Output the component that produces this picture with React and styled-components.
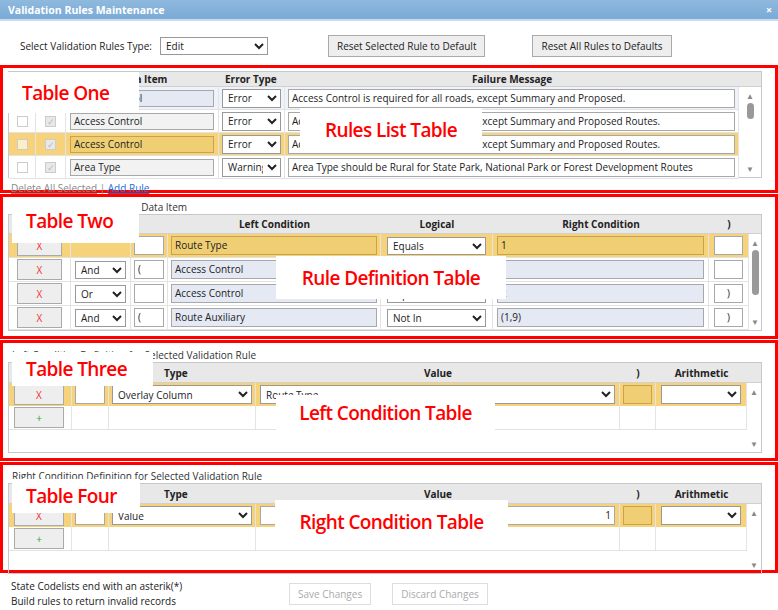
import React from "react";
import styled, { createGlobalStyle } from "styled-components";

const Global = createGlobalStyle`
  body { margin: 0; background: #fff; font-family: "Open Sans", "Liberation Sans", sans-serif; font-size: 10px; color: #222; }
  * { box-sizing: border-box; }
`;

const YELLOW = "#f6d27a";

const Page = styled.div`
  width: 778px;
  height: 610px;
  display: flex;
  flex-direction: column;
  overflow: hidden;
`;

const TitleBar = styled.div`
  height: 21px;
  background: linear-gradient(#8fb9de, #7aaad6);
  border-bottom: 2px solid #c9dcef;
  color: #fff;
  font-weight: 700;
  font-size: 10.5px;
  display: flex;
  align-items: center;
  justify-content: space-between;
  padding: 0 6px 0 8px;
`;

const Toolbar = styled.div`
  display: flex;
  align-items: center;
  height: 44px;
  padding: 6px 0 0 20px;
`;

const Label = styled.span`
  margin-right: 8px;
`;

const Select = styled.select`
  width: ${p => p.w || "100%"};
  height: ${p => p.h || 18}px;
  font-family: inherit;
  font-size: 10px;
  border: 1px solid #999;
  background: #fff;
  padding: 0 1px;
  color: #222;
`;

const Button = styled.button`
  height: 22px;
  padding: 0 8px;
  font-family: inherit;
  font-size: 10px;
  border: 1px solid ${p => (p.disabled ? "#ddd" : "#aaa")};
  background: ${p => (p.disabled ? "#fff" : "#eee")};
  color: ${p => (p.disabled ? "#aaa" : "#222")};
  margin-left: ${p => p.ml || 0}px;
`;

const RedBox = styled.div`
  position: relative;
  border: 3px solid #f00;
  height: ${p => p.h}px;
  padding: ${p => p.pt || 3}px 13px 0 5px;
  margin-bottom: 1px;
`;

const Caption = styled.div`
  height: 13px;
  line-height: 13px;
  padding-left: 4px;
  color: #333;
`;

const Frame = styled.div`
  border: 1px solid #c8c8c8;
  height: ${p => p.h}px;
  display: flex;
  flex-direction: column;
`;

const Grid = styled.div`
  display: grid;
  grid-template-columns: ${p => p.cols};
  align-items: center;
  height: ${p => p.h}px;
  background: ${p => p.bg || "#fff"};
  border-bottom: ${p => (p.line ? "1px solid #e2e2e2" : "none")};
`;

const Head = styled(Grid)`
  background: #e8e8e8;
  font-weight: 700;
  border-bottom: 1px solid #d0d0d0;
`;

const HCell = styled.div`
  text-align: ${p => p.align || "center"};
  padding-left: ${p => p.pl || 0}px;
`;

const Cell = styled.div`
  height: 100%;
  display: flex;
  align-items: center;
  justify-content: ${p => (p.center ? "center" : "flex-start")};
  padding: 0 ${p => p.px ?? 4}px;
  border-right: 1px solid #e4e4e4;
`;

const Body = styled.div`
  flex: 1;
  display: flex;
  min-height: 0;
`;

const Rows = styled.div`
  flex: 1;
`;

const Scroll = styled.div`
  width: ${p => p.w}px;
  display: flex;
  flex-direction: column;
  align-items: center;
  justify-content: space-between;
  color: #888;
  font-size: 8px;
  padding: 3px 0;
`;

const Thumb = styled.div`
  width: 7px;
  border-radius: 4px;
  background: #999;
  height: ${p => p.h}px;
  margin-top: ${p => p.mt}px;
  flex: none;
`;

const Spacer = styled.div`
  flex: 1;
`;

const Text = styled.div`
  width: 100%;
  height: ${p => p.h || 17}px;
  line-height: ${p => (p.h || 17) - 2}px;
  border: 1px solid ${p => p.border || "#a8a8a8"};
  background: ${p => p.bg || "#fff"};
  padding: 0 3px;
  white-space: nowrap;
  overflow: hidden;
  text-align: ${p => p.align || "left"};
`;

const Check = styled.div`
  width: 11px;
  height: 11px;
  border: 1px solid #ccc;
  background: ${p => p.bg || "#fff"};
  color: #bbb;
  font-size: 9px;
  line-height: 9px;
  text-align: center;
`;

const XButton = styled.div`
  width: 50px;
  height: 21px;
  border: 1px solid #aaa;
  background: #eee;
  color: ${p => (p.add ? "#2a2" : "#e33")};
  display: flex;
  align-items: center;
  justify-content: center;
`;

const Links = styled.div`
  padding: 3px 0 0 3px;
  color: #888;
  & a { color: #1a6fd6; text-decoration: underline; }
  & span { text-decoration: underline; }
`;

const Overlay = styled.div`
  position: absolute;
  left: ${p => p.x}px;
  top: ${p => p.y}px;
  width: ${p => p.w}px;
  height: ${p => p.h}px;
  background: #fff;
  color: #f00;
  font-family: "Open Sans", sans-serif;
  font-weight: 600;
  font-size: 19px;
  letter-spacing: -0.6px;
  display: flex;
  align-items: center;
  justify-content: ${p => (p.left ? "flex-start" : "center")};
  padding-left: ${p => (p.left ? 14 : 0)}px;
`;

const Footer = styled.div`
  display: flex;
  align-items: center;
  padding: 5px 0 0 11px;
  line-height: 15px;
`;

const Notes = styled.div`
  width: 278px;
`;

const c1 = "27px 30px 153px 66px 1fr";
const c2 = "62px 60px 37px 213px 112px 216px 40px";
const c3 = "63px 37px 147px 364px 36px 91px";

function RulesTable() {
  const rows = [
    { bg: "#eef2fb", item: "Access Control", err: "Error", msg: "Access Control is required for all roads, except Summary and Proposed." },
    { item: "Access Control", err: "Error", msg: "Access Control is required for all roads, except Summary and Proposed Routes." },
    { bg: YELLOW, item: "Access Control", err: "Error", msg: "Access Control is required for all roads, except Summary and Proposed Routes." },
    { item: "Area Type", err: "Warning", msg: "Area Type should be Rural for State Park, National Park or Forest Development Routes" },
  ];
  return (
    <Frame h={107}>
      <Head cols={c1 + " 22px"} h={15}>
        <HCell /><HCell /><HCell>Data Item</HCell><HCell align="left" pl={6}>Error Type</HCell><HCell>Failure Message</HCell><HCell />
      </Head>
      <Body>
        <Rows>
          {rows.map((r, i) => (
            <Grid key={i} cols={c1} h={23} bg={r.bg} line>
              <Cell center><Check bg={r.bg ? "#fbeec8" : "#fff"} /></Cell>
              <Cell center><Check bg="#e8e8e8">✓</Check></Cell>
              <Cell><Text bg={r.bg === YELLOW ? "#f0cf74" : r.bg ? "#e5e9f3" : "#f2f2f2"} border={r.bg === YELLOW ? "#c9a24a" : "#a8a8a8"}>{r.item}</Text></Cell>
              <Cell px={3}><Select h={19}><option>{r.err}</option></Select></Cell>
              <Cell px={3}><Text h={19}>{r.msg}</Text></Cell>
            </Grid>
          ))}
        </Rows>
        <Scroll w={22}>▲<Thumb h={16} mt={2} /><Spacer />▼</Scroll>
      </Body>
    </Frame>
  );
}

function DefinitionTable() {
  const rows = [
    { bg: YELLOW, logic: null, open: "", left: "Route Type", op: "Equals", right: "1", close: "" },
    { logic: "And", open: "(", left: "Access Control", op: "Equals", right: "", close: "" },
    { logic: "Or", open: "", left: "Access Control", op: "Equals", right: "2", close: ")" },
    { logic: "And", open: "(", left: "Route Auxiliary", op: "Not In", right: "(1,9)", close: ")" },
  ];
  return (
    <Frame h={117}>
      <Head cols={c2 + " 12px"} h={19}>
        <HCell /><HCell /><HCell align="left" pl={2}>(</HCell><HCell>Left Condition</HCell><HCell>Logical</HCell><HCell>Right Condition</HCell><HCell>)</HCell><HCell />
      </Head>
      <Body>
        <Rows>
          {rows.map((r, i) => {
            const y = r.bg === YELLOW;
            const fill = y ? "#f0cf74" : "#e5e9f3";
            const bd = y ? "#c9a24a" : "#a8a8a8";
            return (
              <Grid key={i} cols={c2} h={24} bg={r.bg} line>
                <Cell px={8}><XButton>X</XButton></Cell>
                <Cell>{r.logic && <Select h={18}><option>{r.logic}</option></Select>}</Cell>
                <Cell px={3}><Text h={19}>{r.open}</Text></Cell>
                <Cell px={3}><Text h={19} bg={fill} border={bd}>{r.left}</Text></Cell>
                <Cell px={6}><Select h={18}><option>{r.op}</option></Select></Cell>
                <Cell px={4}><Text h={19} bg={fill} border={bd}>{r.right}</Text></Cell>
                <Cell px={5}><Text h={19} align="center">{r.close}</Text></Cell>
              </Grid>
            );
          })}
        </Rows>
        <Scroll w={12}>▲<Thumb h={45} mt={2} /><Spacer />▼</Scroll>
      </Body>
    </Frame>
  );
}

function ConditionTable({ type, value }) {
  return (
    <Frame h={91}>
      <Head cols={c3 + " 14px"} h={20}>
        <HCell /><HCell /><HCell align="left" pl={55}>Type</HCell><HCell>Value</HCell><HCell>)</HCell><HCell>Arithmetic</HCell><HCell />
      </Head>
      <Body>
        <Rows>
          <Grid cols={c3} h={23} bg={YELLOW}>
            <Cell px={5}><XButton>X</XButton></Cell>
            <Cell px={3}><Text h={19} /></Cell>
            <Cell px={3}><Select h={19}><option>{type}</option></Select></Cell>
            <Cell px={4}>
              {value === "1" ? <Text h={19} align="right">1</Text> : <Select h={19}><option>{value}</option></Select>}
            </Cell>
            <Cell px={3}><Text h={19} bg="#f0cf74" border="#c9a24a" /></Cell>
            <Cell px={5}><Select h={19}><option></option></Select></Cell>
          </Grid>
          <Grid cols={c3} h={24} line>
            <Cell px={5}><XButton add>+</XButton></Cell>
            <Cell /><Cell /><Cell /><Cell /><Cell />
          </Grid>
        </Rows>
        <Scroll w={14}>▲<Spacer />▼</Scroll>
      </Body>
    </Frame>
  );
}

export default function App() {
  return (
    <Page>
      <Global />
      <TitleBar><span>Validation Rules Maintenance</span><span>×</span></TitleBar>
      <Toolbar>
        <Label>Select Validation Rules Type:</Label>
        <Select w="108px" h={18}><option>Edit</option></Select>
        <Button ml={60}>Reset Selected Rule to Default</Button>
        <Button ml={47}>Reset All Rules to Defaults</Button>
      </Toolbar>

      <RedBox h={128} pt={3}>
        <RulesTable />
        <Links><span>Delete All Selected</span> | <a>Add Rule</a></Links>
        <Overlay x={5} y={4} w={131} h={41} left>Table One</Overlay>
        <Overlay x={297} y={40} w={182} h={43}>Rules List Table</Overlay>
      </RedBox>

      <RedBox h={145} pt={4}>
        <Caption>Rule Definition for Selected Data Item</Caption>
        <DefinitionTable />
        <Overlay x={9} y={1} w={127} h={45} left>Table Two</Overlay>
        <Overlay x={273} y={59} w={230} h={43}>Rule Definition Table</Overlay>
      </RedBox>

      <RedBox h={121} pt={6}>
        <Caption>Left Condition Definition for Selected Validation Rule</Caption>
        <ConditionTable type="Overlay Column" value="Route Type" />
        <Overlay x={9} y={9} w={141} h={34} left>Table Three</Overlay>
        <Overlay x={273} y={52} w={219} h={35}>Left Condition Table</Overlay>
      </RedBox>

      <RedBox h={111} pt={5}>
        <Caption>Right Condition Definition for Selected Validation Rule</Caption>
        <ConditionTable type="Value" value="1" />
        <Overlay x={9} y={14} w={128} h={34} left>Table Four</Overlay>
        <Overlay x={272} y={35} w={233} h={44}>Right Condition Table</Overlay>
      </RedBox>

      <Footer>
        <Notes>State Codelists end with an asterik(*)<br />Build rules to return invalid records</Notes>
        <Button disabled>Save Changes</Button>
        <Button disabled ml={21}>Discard Changes</Button>
      </Footer>
    </Page>
  );
}
